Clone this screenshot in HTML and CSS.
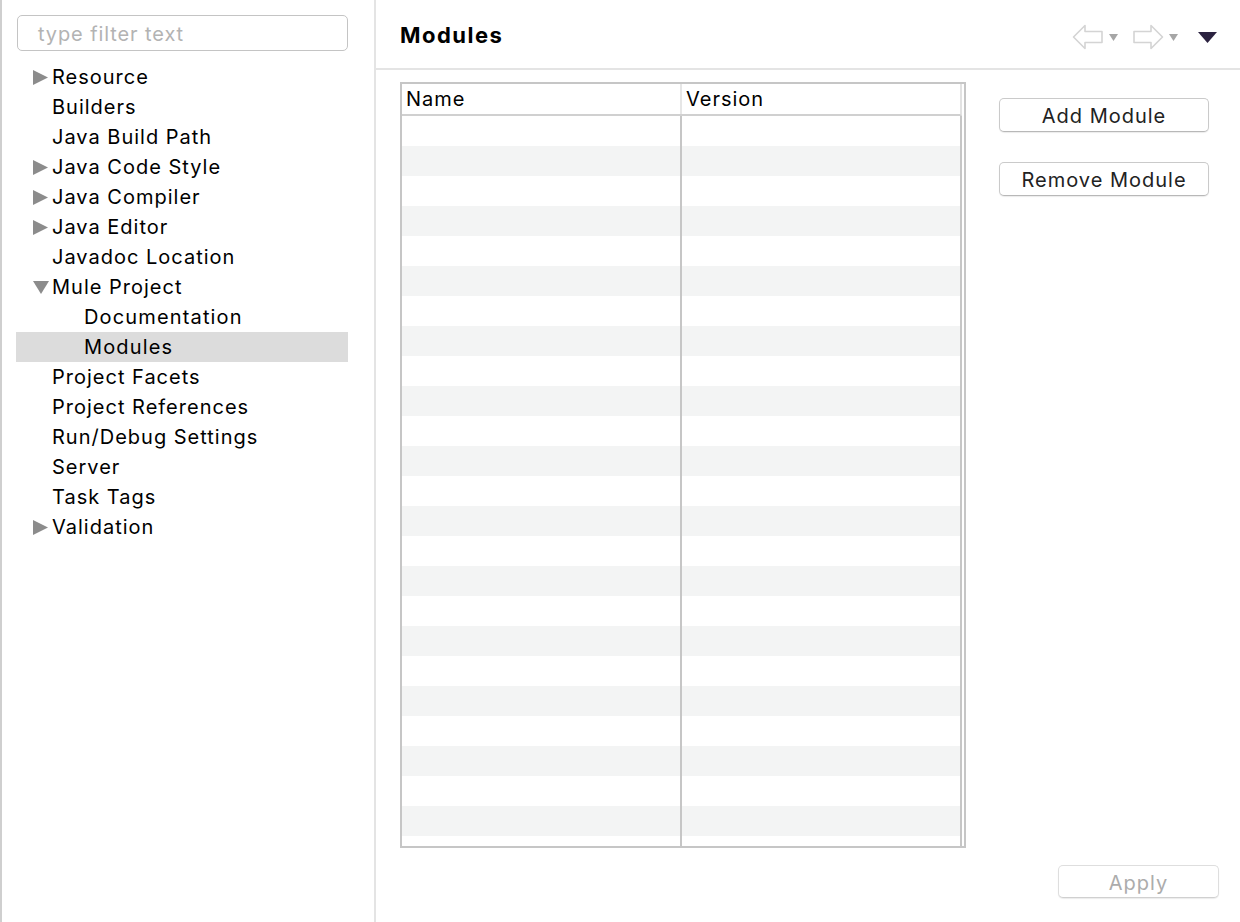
FILE: index.html
```html
<!DOCTYPE html>
<html>
<head>
<meta charset="utf-8">
<link rel="stylesheet" href="styles.css">
</head>
<body>
<div class="window">
  <aside class="sidebar">
    <div class="filter"><span class="placeholder">type filter text</span></div>
    <ul class="tree">
      <li class="row"><span class="tw"><svg width="15" height="15" viewBox="0 0 15 15"><polygon points="0,0 15,7.5 0,15" fill="#8c8c8c"/></svg></span>Resource</li>
      <li class="row"><span class="tw"></span>Builders</li>
      <li class="row"><span class="tw"></span>Java Build Path</li>
      <li class="row"><span class="tw"><svg width="15" height="15" viewBox="0 0 15 15"><polygon points="0,0 15,7.5 0,15" fill="#8c8c8c"/></svg></span>Java Code Style</li>
      <li class="row"><span class="tw"><svg width="15" height="15" viewBox="0 0 15 15"><polygon points="0,0 15,7.5 0,15" fill="#8c8c8c"/></svg></span>Java Compiler</li>
      <li class="row"><span class="tw"><svg width="15" height="15" viewBox="0 0 15 15"><polygon points="0,0 15,7.5 0,15" fill="#8c8c8c"/></svg></span>Java Editor</li>
      <li class="row"><span class="tw"></span>Javadoc Location</li>
      <li class="row"><span class="tw"><svg width="16" height="15" viewBox="0 0 16 15"><polygon points="0,1 16,1 8,14" fill="#8c8c8c"/></svg></span>Mule Project</li>
      <li class="row child">Documentation</li>
      <li class="row child selected">Modules</li>
      <li class="row"><span class="tw"></span>Project Facets</li>
      <li class="row"><span class="tw"></span>Project References</li>
      <li class="row"><span class="tw"></span>Run/Debug Settings</li>
      <li class="row"><span class="tw"></span>Server</li>
      <li class="row"><span class="tw"></span>Task Tags</li>
      <li class="row"><span class="tw"><svg width="15" height="15" viewBox="0 0 15 15"><polygon points="0,0 15,7.5 0,15" fill="#8c8c8c"/></svg></span>Validation</li>
    </ul>
  </aside>
  <main class="main">
    <header class="header">
      <h1 class="title">Modules</h1>
      <div class="nav">
        <svg class="arrow" width="32" height="26" viewBox="0 0 32 26"><path d="M1.5 13 L13 1.5 L13 7.5 L30 7.5 L30 18.5 L13 18.5 L13 24.5 Z" fill="#fff" stroke="#d4d4d4" stroke-width="1.6" stroke-linejoin="round"/></svg>
        <svg class="drop" width="9" height="7" viewBox="0 0 9 7"><polygon points="0,0 9,0 4.5,7" fill="#a6a6a6"/></svg>
        <svg class="arrow fwd" width="32" height="26" viewBox="0 0 32 26"><path d="M30.5 13 L19 1.5 L19 7.5 L2 7.5 L2 18.5 L19 18.5 L19 24.5 Z" fill="#fff" stroke="#d4d4d4" stroke-width="1.6" stroke-linejoin="round"/></svg>
        <svg class="drop" width="9" height="7" viewBox="0 0 9 7"><polygon points="0,0 9,0 4.5,7" fill="#a6a6a6"/></svg>
        <svg class="menu" width="19" height="11" viewBox="0 0 19 11"><polygon points="0,0 19,0 9.5,11" fill="#2b2240"/></svg>
      </div>
    </header>
    <section class="content">
      <div class="table">
        <div class="thead">
          <div class="th name">Name</div>
          <div class="th version">Version</div>
        </div>
        <div class="tbody">
          <div class="col name"></div>
          <div class="col version"></div>
        </div>
      </div>
      <div class="actions">
        <button class="btn">Add Module</button>
        <button class="btn">Remove Module</button>
      </div>
    </section>
    <footer class="footer">
      <button class="btn apply">Apply</button>
    </footer>
  </main>
</div>
</body>
</html>
```
FILE: styles.css
```css
* { box-sizing: border-box; }
html, body { margin: 0; padding: 0; }
body {
  width: 1240px;
  height: 922px;
  overflow: hidden;
  background: #fff;
  font-family: Inter, "Noto Sans", sans-serif;
  color: #000;
}
.window {
  display: flex;
  height: 922px;
  border-left: 2px solid #cfcfcf;
}
.sidebar {
  width: 374px;
  flex: none;
  border-right: 2px solid #e4e4e4;
  padding: 15px 0 0 14px;
}
.filter {
  width: 331px;
  height: 36px;
  margin-left: 1px;
  border: 1px solid #c4c4c4;
  border-radius: 5px;
  display: flex;
  align-items: center;
  padding: 1px 0 0 20px;
}
.placeholder {
  font-size: 20px;
  color: #b3b3b3;
  letter-spacing: 0.9px;
}
.tree {
  list-style: none;
  margin: 11px 0 0 0;
  padding: 0;
  width: 332px;
}
.row {
  height: 30px;
  display: flex;
  align-items: center;
  padding-left: 17px;
  font-size: 20px;
  letter-spacing: 1px;
  color: #000;
}
.tw {
  width: 19px;
  flex: none;
  display: flex;
  align-items: center;
}
.row.child { padding-left: 68px; letter-spacing: 1.15px; }
.row.selected { background: #dcdcdc; }
.main {
  flex: 1;
  display: flex;
  flex-direction: column;
}
.header {
  height: 70px;
  flex: none;
  border-bottom: 2px solid #e4e4e4;
  display: flex;
  align-items: center;
  justify-content: space-between;
  padding: 2px 23px 0 24px;
}
.title {
  margin: 0;
  font-size: 22px;
  font-weight: 700;
  letter-spacing: 1.5px;
}
.nav {
  display: flex;
  align-items: center;
  padding-top: 4px;
}
.drop { margin-left: 5px; margin-right: 14px; }
.menu { margin-left: 6px; }
.content {
  display: flex;
  align-items: flex-start;
  padding: 12px 0 0 24px;
}
.table {
  width: 566px;
  height: 766px;
  border: 2px solid #c6c6c6;
  padding-right: 2px;
  display: flex;
  flex-direction: column;
}
.thead {
  height: 32px;
  flex: none;
  display: flex;
  border-bottom: 2px solid #d0d0d0;
  border-right: 2px solid #e2e2e2;
}
.th {
  font-size: 20px;
  letter-spacing: 1px;
  display: flex;
  align-items: center;
  padding: 0 0 1px 4px;
}
.th.name { width: 280px; border-right: 2px solid #e6e6e6; }
.th.version { flex: 1; padding-left: 4px; }
.tbody {
  flex: 1;
  display: flex;
  border-right: 2px solid #c6c6c6;
  background:
    linear-gradient(#fff, #fff) 0 720px / 100% 100% no-repeat,
    repeating-linear-gradient(to bottom, #fff 0, #fff 30px, #f3f4f4 30px, #f3f4f4 60px);
}
.col.name { width: 280px; border-right: 2px solid #c6c6c6; }
.col.version { flex: 1; }
.actions {
  display: flex;
  flex-direction: column;
  gap: 30px;
  margin-left: 33px;
  padding-top: 16px;
}
.btn {
  font-family: Inter, "Noto Sans", sans-serif;
  font-size: 20px;
  letter-spacing: 1px;
  color: #222;
  background: #fff;
  border: 1px solid #cacaca;
  border-bottom-color: #b8b8b8;
  border-radius: 5px;
  box-shadow: 0 1px 1px rgba(0,0,0,0.08);
  width: 210px;
  height: 34px;
  padding: 2px 0 0 0;
  display: flex;
  align-items: center;
  justify-content: center;
}
.footer {
  display: flex;
  justify-content: flex-end;
  padding: 17px 21px 0 0;
}
.btn.apply {
  width: 161px;
  height: 33px;
  color: #acacac;
  border-color: #dedede;
  border-bottom-color: #d0d0d0;
}
```
